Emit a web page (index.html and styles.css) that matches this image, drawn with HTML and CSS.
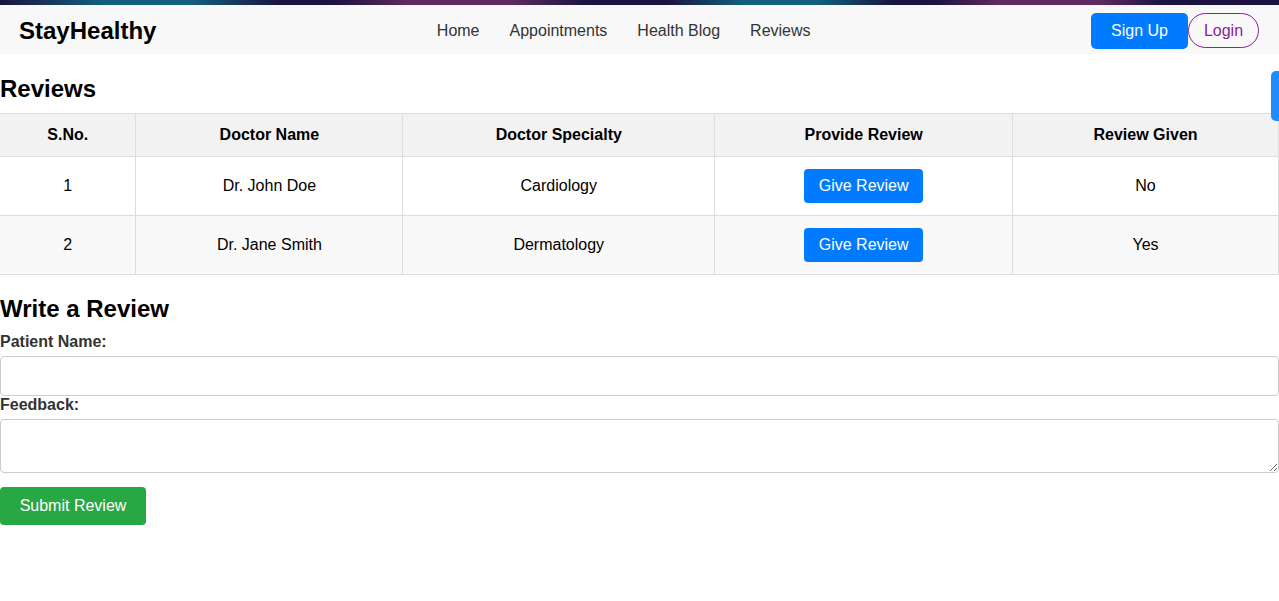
FILE: index.html
```html
<!DOCTYPE html>
<html lang="en">
<head>
<meta charset="utf-8">
<title>StayHealthy - Reviews</title>
<link rel="stylesheet" href="styles.css">
</head>
<body>
<div class="topbar"></div>
<nav class="navbar">
  <div class="logo">StayHealthy</div>
  <ul class="nav-links">
    <li><a href="#">Home</a></li>
    <li><a href="#">Appointments</a></li>
    <li><a href="#">Health Blog</a></li>
    <li><a href="#">Reviews</a></li>
  </ul>
  <div class="nav-buttons">
    <button class="btn-signup">Sign Up</button>
    <button class="btn-login">Login</button>
  </div>
</nav>
<div class="side-tab"></div>
<main class="content">
  <h2 class="section-title">Reviews</h2>
  <table class="reviews-table">
    <colgroup>
      <col class="c1"><col class="c2"><col class="c3"><col class="c4"><col class="c5">
    </colgroup>
    <thead>
      <tr>
        <th>S.No.</th>
        <th>Doctor Name</th>
        <th>Doctor Specialty</th>
        <th>Provide Review</th>
        <th>Review Given</th>
      </tr>
    </thead>
    <tbody>
      <tr>
        <td>1</td>
        <td>Dr. John Doe</td>
        <td>Cardiology</td>
        <td><button class="btn-give">Give Review</button></td>
        <td>No</td>
      </tr>
      <tr>
        <td>2</td>
        <td>Dr. Jane Smith</td>
        <td>Dermatology</td>
        <td><button class="btn-give">Give Review</button></td>
        <td>Yes</td>
      </tr>
    </tbody>
  </table>

  <h2 class="section-title form-title">Write a Review</h2>
  <form class="review-form">
    <label class="form-label" for="pname">Patient Name:</label>
    <input class="form-input" id="pname" type="text">
    <label class="form-label" for="feedback">Feedback:</label>
    <textarea class="form-textarea" id="feedback"></textarea>
    <button type="button" class="btn-submit">Submit Review</button>
  </form>
</main>
</body>
</html>
```

FILE: styles.css
```css
* { box-sizing: border-box; }

html, body {
  margin: 0;
  padding: 0;
  background: #ffffff;
  font-family: "Liberation Sans", Arial, sans-serif;
  color: #000;
  overflow: hidden;
}

.topbar {
  height: 6px;
  background: linear-gradient(90deg,
    #1b1240 0%, #12607a 8%, #12607a 15%, #1b1240 22%,
    #1b1240 26%, #5f2a62 32%, #5f2a62 40%, #1b1240 46%,
    #1b1240 52%, #12607a 58%, #12607a 64%, #1b1240 70%,
    #1b1240 73%, #5f2a62 78%, #5f2a62 86%, #1b1240 91%, #1b1240 100%);
  border-bottom: 1px solid #3d3a55;
}

.navbar {
  display: flex;
  align-items: center;
  justify-content: space-between;
  height: 49px;
  padding: 2px 20px 0 19px;
  background: #f8f8f8;
  margin-top: -1px;
}

.logo {
  font-size: 24px;
  font-weight: bold;
  color: #000;
}

.nav-links {
  list-style: none;
  display: flex;
  gap: 30px;
  margin: 0;
  padding: 0;
}

.nav-links a {
  color: #333;
  text-decoration: none;
  font-size: 16px;
}

.nav-buttons {
  display: flex;
  align-items: center;
}

.btn-signup {
  font-family: inherit;
  font-size: 16px;
  color: #fff;
  background: #007bff;
  border: none;
  border-radius: 5px;
  height: 36px;
  width: 97px;
  padding: 0;
  cursor: pointer;
}

.btn-login {
  font-family: inherit;
  font-size: 16px;
  color: #8e1a9e;
  background: transparent;
  border: 1px solid #8e1a9e;
  border-radius: 20px;
  height: 35px;
  width: 71px;
  padding: 0;
  cursor: pointer;
}

.side-tab {
  position: absolute;
  top: 71px;
  right: -6px;
  width: 14px;
  height: 50px;
  border-radius: 5px;
  background: #1e8bff;
}

.content {
  padding: 0;
}

.section-title {
  font-size: 24px;
  font-weight: bold;
  margin: 21px 0 10px;
  line-height: 28px;
}

.reviews-table {
  width: 100%;
  border-collapse: collapse;
  font-size: 16px;
}

.c1 { width: 136px; }
.c2 { width: 267px; }
.c3 { width: 312px; }
.c4 { width: 298px; }
.c5 { width: 266px; }

.reviews-table th,
.reviews-table td {
  border: 1px solid #ddd;
  padding: 12px;
  text-align: center;
  line-height: 18px;
}

.reviews-table tr > :first-child { border-left: none; }

.reviews-table th {
  background: #f2f2f2;
  font-weight: bold;
}

.reviews-table tbody tr:nth-child(even) td {
  background: #f9f9f9;
}

.btn-give {
  font-family: inherit;
  font-size: 16px;
  color: #fff;
  background: #007bff;
  border: none;
  border-radius: 4px;
  height: 34px;
  width: 119px;
  padding: 0;
  cursor: pointer;
}

.form-title {
  margin: 20px 0 10px;
}

.review-form {
  display: flex;
  flex-direction: column;
  align-items: flex-start;
}

.form-label {
  font-weight: bold;
  font-size: 16px;
  color: #333;
  line-height: 18px;
  margin-bottom: 5px;
}

.form-input,
.form-textarea {
  width: 100%;
  border: 1px solid #ccc;
  border-radius: 4px;
  font-family: inherit;
  font-size: 16px;
  padding: 10px;
}

.form-input {
  height: 40px;
  margin-bottom: 0;
}

.form-textarea {
  height: 54px;
  resize: vertical;
  margin: 0 0 14px;
}

.btn-submit {
  font-family: inherit;
  font-size: 16px;
  color: #fff;
  background: #28a745;
  border: none;
  border-radius: 4px;
  height: 38px;
  width: 146px;
  padding: 0;
  cursor: pointer;
}
```
